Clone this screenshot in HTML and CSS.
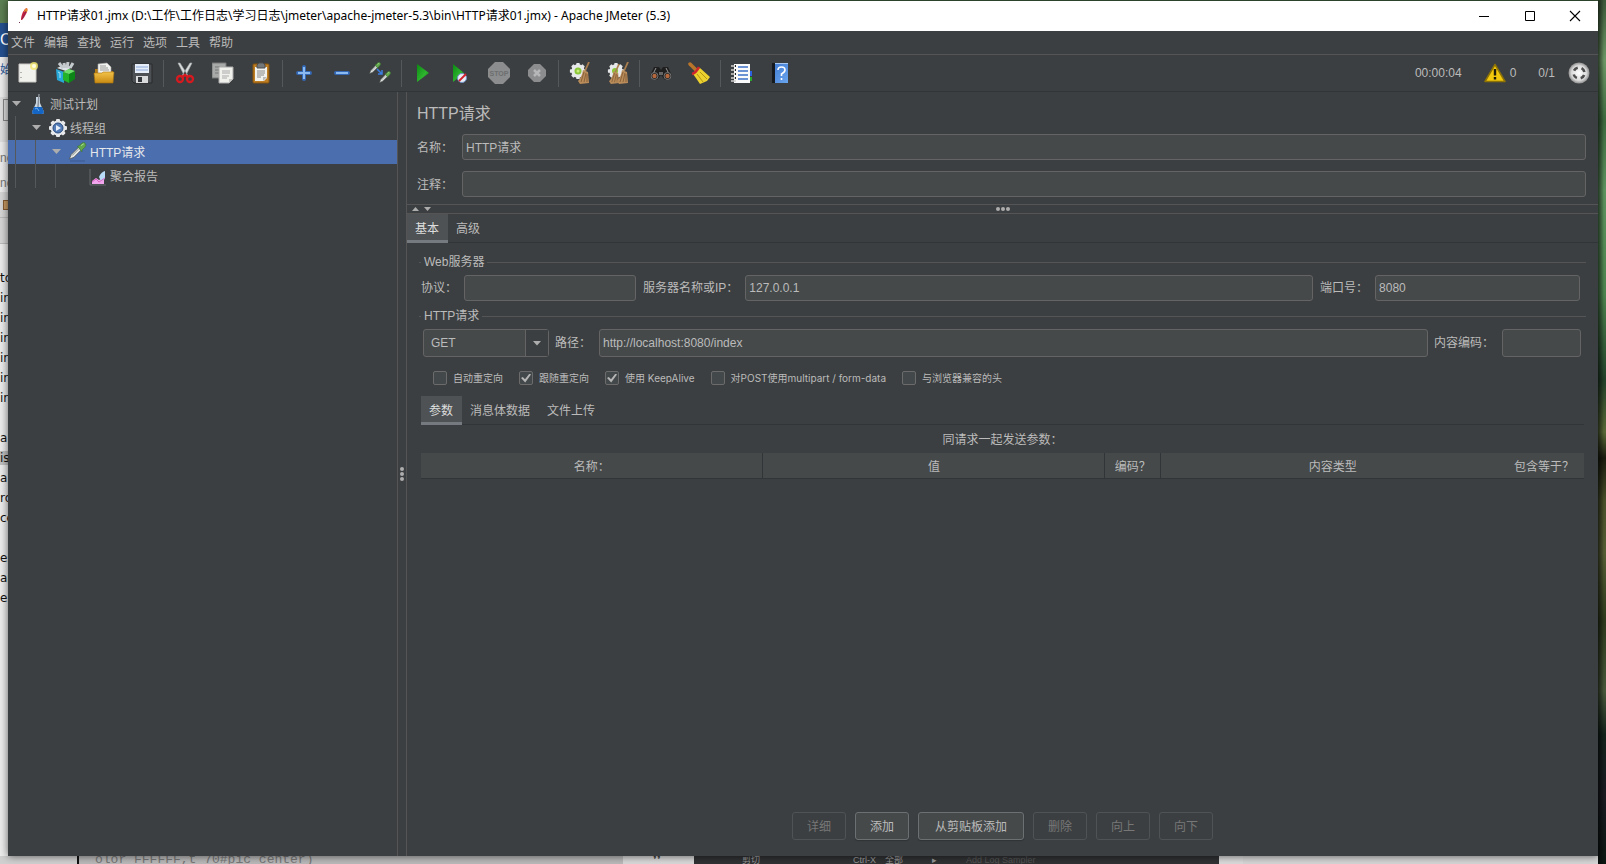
FILE: index.html
```html
<!DOCTYPE html>
<html lang="zh-CN">
<head>
<meta charset="utf-8">
<title>HTTP请求01.jmx - Apache JMeter (5.3)</title>
<link rel="stylesheet" href="styles.css">
</head>
<body>
<svg width="0" height="0" class="defs" aria-hidden="true">
  <defs>
    <linearGradient id="gold" x1="0" y1="0" x2="0" y2="1"><stop offset="0" stop-color="#f3c34a"/><stop offset="1" stop-color="#c98a12"/></linearGradient>
    <linearGradient id="green" x1="0" y1="0" x2="1" y2="1"><stop offset="0" stop-color="#0a8a12"/><stop offset=".6" stop-color="#2fb52f"/><stop offset="1" stop-color="#0a7a10"/></linearGradient>
    <linearGradient id="blue" x1="0" y1="0" x2="1" y2="1"><stop offset="0" stop-color="#3f78d0"/><stop offset="1" stop-color="#6aa5ee"/></linearGradient>
    <radialGradient id="silver"><stop offset="0" stop-color="#ffffff"/><stop offset=".7" stop-color="#dcdcdc"/><stop offset="1" stop-color="#8f8f8f"/></radialGradient>
    <symbol id="gear" viewBox="0 0 20 20">
      <g fill="#e6e8ea"><circle cx="10" cy="10" r="7.4"/><g id="teeth"><rect x="8" y="1" width="4" height="18" rx="1"/><rect x="1" y="8" width="18" height="4" rx="1"/></g><use href="#teeth" transform="rotate(45 10 10)"/></g>
    </symbol>
    <symbol id="dropper" viewBox="0 0 20 20">
      <path d="M1 19l2-5 8-8 3 3-8 8z" fill="#e3e6e4" stroke="#4c5450" stroke-width=".8"/><path d="M4 15l7-7" stroke="#7c8580" stroke-width="1"/><path d="M10 5l2-1 3-3q3-1 4 1t-1 4l-3 3 0 2z" fill="#62a84c" stroke="#3b7430" stroke-width=".7"/><path d="M14 4l3-2" stroke="#b4e29d"/>
    </symbol>
    <symbol id="broom" viewBox="0 0 12 22">
      <path d="M11 0L7 9" stroke="#a97d4e" stroke-width="1.8"/><path d="M5 8l5 2 1 11-9 1-2-3q4-4 5-11z" fill="#b98c5a"/><path d="M6 10L3 20M8 11L6 20M9 12v8" stroke="#76522c" stroke-width=".7"/>
    </symbol>
  </defs>
</svg>
<div class="desktop" aria-hidden="true">
  <div class="editor">
    <div class="ribbon">C</div>
    <div class="ribbon-row">始</div>
    <div class="ribbon-box"><i></i></div>
    <div class="editor-tab">nc</div>
    <div class="editor-tab">nc</div>
    <div class="editor-tool"><i></i></div>
    <div class="editor-tool"></div>
    <pre class="code">to
in
in
in
in
in
in

a
<mark>is</mark>
a
ro
ce

es
ar
en</pre>
  </div>
  <div class="below">
    <div class="below-code">olor_FFFFFF,t_70#pic_center)</div>
    <div class="below-mark">❜❜</div>
    <div class="below-menu"><span>剪切</span><span>Ctrl-X</span><span>全部</span><span>▸</span><span class="dim">Add Log Sampler</span></div>
    <div class="below-page"></div>
  </div>
</div>

<main class="window">
  <header class="titlebar">
    <svg class="feather" width="12" height="16" viewBox="0 0 12 16"><path d="M3 12Q3 6 7 1l2-1q1 2-1 6t-4 6z" fill="#c8203c"/><path d="M7 1l2-1q1 2 0 4l-3 0z" fill="#e8862c"/><path d="M4 11l4-8" stroke="#7b2356" stroke-width=".8"/><path d="M1 15l1-1" stroke="#6f2c55"/></svg>
    <h1 class="caption">HTTP请求01.jmx (D:\工作\工作日志\学习日志\jmeter\apache-jmeter-5.3\bin\HTTP请求01.jmx) - Apache JMeter (5.3)</h1>
    <div class="winbuttons">
      <button aria-label="最小化"><svg width="12" height="12" viewBox="0 0 12 12"><path d="M1 6.500h10" stroke="#000"/></svg></button>
      <button aria-label="最大化"><svg width="12" height="12" viewBox="0 0 12 12"><path d="M1.500 1.500h9v9h-9z" fill="none" stroke="#000"/></svg></button>
      <button aria-label="关闭"><svg width="12" height="12" viewBox="0 0 12 12"><path d="M1 1l10 10M11 1L1 11" stroke="#000" stroke-width="1.100"/></svg></button>
    </div>
  </header>

  <nav class="menubar">
    <button>文件</button><button>编辑</button><button>查找</button><button>运行</button><button>选项</button><button>工具</button><button>帮助</button>
  </nav>

  <div class="toolbar">
    <div class="group">
      <button aria-label="新建"><svg viewBox="0 0 22 22"><path d="M2 2h17v18H2z" fill="#f1f1ee" stroke="#c9c9c4"/><path d="M4 10v1M4 15v1" stroke="#777"/><circle cx="17" cy="4" r="4" fill="#f4e96b" opacity=".8"/><circle cx="17" cy="4" r="2" fill="#fffde0"/></svg></button>
      <button aria-label="模板"><svg viewBox="0 0 22 22"><path d="M2 6l7-3 8 2-6 4z" fill="#dde3e6"/><path d="M4 1l4 5M9 1l1 5M13 0l-1 6M18 1l-3 5" stroke="#c3c9cc" stroke-width="3"/><path d="M1 7l8 3v11l-7-3z" fill="#28a8d8"/><path d="M3 10l2 1v5" stroke="#a7e3f7" fill="none"/><path d="M8 10l6 2v9l-6-3z" fill="#23b329"/><path d="M14 12l6-3v8l-6 4z" fill="#0c8717"/><path d="M8 10l6-3 6 2-6 3z" fill="#6de06a"/></svg></button>
      <button aria-label="打开"><svg viewBox="0 0 22 22"><path d="M2 7h5l1 2h12v11H2z" fill="#b57b15"/><path d="M5 2l9-1 4 4v8H5z" fill="#f2f2ef" stroke="#aaa" stroke-width=".6"/><path d="M7 4h6M7 6h8M7 8h9" stroke="#999"/><path d="M1 11h8l1-1h11l-1 11H2z" fill="url(#gold)" stroke="#a8740f" stroke-width=".6"/></svg></button>
      <button aria-label="保存"><svg viewBox="0 0 22 22"><path d="M1 2h20v19H3l-2-2z" fill="#4d5054" stroke="#292b2d"/><path d="M4 2h14v9H4z" fill="#e4edf8"/><path d="M5 5h12M5 8h12" stroke="#8cabda"/><path d="M5 14h12v7H5z" fill="#d9dadb"/><path d="M7 15h4v5H7z" fill="#33363a"/></svg></button>
    </div>
    <div class="group">
      <button aria-label="剪切"><svg viewBox="0 0 22 22"><path d="M4 1l2 0 7 11 1 2-4-1zM18 1l-2 0-7 11-1 2 4-1z" fill="#dadddd" stroke="#a3a6a7" stroke-width=".6"/><g fill="none" stroke="#d71920" stroke-width="2.300"><ellipse cx="6" cy="17" rx="3" ry="3"/><ellipse cx="16" cy="17" rx="3" ry="3"/><path d="M8 15l3-2 3 2"/></g></svg></button>
      <button aria-label="复制"><svg viewBox="0 0 22 22"><path d="M0 1h14v15H0z" fill="#a8aaaa" stroke="#777"/><path d="M3 5h5M3 8h4M3 11h4" stroke="#777"/><path d="M7 5h14v12l-4 4H7z" fill="#f0f0ed" stroke="#aaa"/><path d="M10 9h8M10 11h8M10 14h7M10 16h5" stroke="#aaa"/><path d="M21 17h-4v4z" fill="#c5c5c2"/></svg></button>
      <button aria-label="粘贴"><svg viewBox="0 0 22 22"><rect x="3" y="2" width="16" height="19" rx="1" fill="#bd7d22" stroke="#86540e"/><path d="M5 5h12v11l-3 3H5z" fill="#f1f1ee"/><path d="M7 3l2-2h4l2 2v3H7z" fill="#74777a" stroke="#4c4f50"/><path d="M7 9h8M7 11h8M7 13h7M7 15h4" stroke="#888"/><path d="M17 15h-4v4z" fill="#bbb"/></svg></button>
    </div>
    <div class="group">
      <button aria-label="展开全部"><svg viewBox="0 0 22 22"><path d="M11 5v12M5 11h12" stroke="#3568b4" stroke-width="4" stroke-linecap="round"/><path d="M11 5v12M5 11h12" stroke="#8bbaf0" stroke-width="2"/></svg></button>
      <button aria-label="收起全部"><svg viewBox="0 0 22 22"><path d="M5 11h12" stroke="#3568b4" stroke-width="4" stroke-linecap="round"/><path d="M5 11h12" stroke="#8bbaf0" stroke-width="2"/></svg></button>
      <button aria-label="切换"><svg viewBox="0 0 22 22"><use href="#dropper" x="0" y="0" width="12" height="12"/><use href="#dropper" x="10" y="9" width="12" height="12"/><path d="M8 7l5 5M13 8v4H9" stroke="#3c7ee0" stroke-width="1.500" fill="none"/></svg></button>
    </div>
    <div class="group">
      <button aria-label="启动"><svg viewBox="0 0 22 22"><path d="M5 2l12 9L5 20z" fill="url(#green)"/></svg></button>
      <button aria-label="不停顿开始"><svg viewBox="0 0 22 22"><path d="M3 2l11 9L3 20z" fill="url(#green)"/><circle cx="12" cy="16" r="4.500" fill="#e9edf4" stroke="#6f92c9"/><path d="M9 19l7-7" stroke="#d3202a" stroke-width="1.800"/></svg></button>
      <button aria-label="停止" disabled><svg viewBox="0 0 22 22"><path d="M7 0h8l7 7v8l-7 7H7l-7-7V7z" fill="#8b8d8e"/><text x="11" y="14" text-anchor="middle" class="stoptext">STOP</text></svg></button>
      <button aria-label="关闭测试" disabled><svg viewBox="0 0 22 22"><path d="M8 2h6l6 6v6l-6 6H8l-6-6V8z" fill="#8b8d8e"/><path d="M8 8l6 6M14 8l-6 6" stroke="#b5b7b8" stroke-width="2.500"/></svg></button>
    </div>
    <div class="group">
      <button aria-label="清除"><svg viewBox="0 0 22 22"><use href="#gear" x="0" y="0" width="18" height="18"/><circle cx="9" cy="9" r="3.500" fill="#8bc63a"/><circle cx="9" cy="9" r="1.500" fill="#c9ed7d"/><use href="#broom" x="9" y="0" width="12" height="22"/></svg></button>
      <button aria-label="清除全部"><svg viewBox="0 0 22 22"><use href="#gear" x="0" y="0" width="18" height="18"/><circle cx="8" cy="9" r="3" fill="#8bc63a"/><use href="#broom" x="2" y="2" width="11" height="20"/><use href="#broom" x="10" y="0" width="12" height="22"/></svg></button>
    </div>
    <div class="group">
      <button aria-label="查找"><svg viewBox="0 0 22 22"><path d="M4 5h5l2 3 2-3h5l4 9-3 4h-4l-4-5-4 5H3l-3-4z" fill="#1f1f1f"/><path d="M6 6l-3 6M16 6l3 6" stroke="#999"/><circle cx="4.500" cy="14" r="3.500" fill="#222" stroke="#888" stroke-width=".8"/><circle cx="17.500" cy="14" r="3.500" fill="#222" stroke="#888" stroke-width=".8"/><circle cx="4.500" cy="14" r="2.200" fill="#b5673d"/><circle cx="17.500" cy="14" r="2.200" fill="#b5673d"/><path d="M9 10h4v3H9z" fill="#666"/></svg></button>
      <button aria-label="重置查找"><svg viewBox="0 0 22 22"><path d="M2 2l6 6" stroke="#b9762b" stroke-width="3.500" stroke-linecap="round"/><path d="M8 8l4-2 10 9-3 4-7 3Q8 16 5 12z" fill="#ecd12f"/><path d="M9 12l6 8M12 10l7 7" stroke="#b39514"/><path d="M4 12Q8 11 11 5" stroke="#d0262b" stroke-width="2.600" fill="none"/></svg></button>
    </div>
    <div class="group">
      <button aria-label="函数助手"><svg viewBox="0 0 22 22"><path d="M3 2h16v19H3z" fill="#fafafa"/><path d="M19 9h2v5h-2z" fill="#2c62df"/><path d="M19 15h2v4h-2z" fill="#2aa52c"/><path d="M7 5h10M7 9h10M7 13h10M7 17h10" stroke="#3c71c8" stroke-width="1.300"/><path d="M0 4h5M0 8h5M0 12h5M0 16h5M0 19h5" stroke="#cfcfcf" stroke-width="1.500"/><path d="M4 4h1M4 8h1M4 12h1M4 16h1" stroke="#222" stroke-width="2"/></svg></button>
      <button aria-label="帮助"><svg viewBox="0 0 22 22"><path d="M3 1h16v20H3z" fill="url(#blue)"/><path d="M3 1h3v20H3z" fill="#16191d"/><path d="M6 1h13v1H6z" fill="#a8c8ef"/><path d="M9 8q0-3 3.500-3t3.500 3q0 2-3.500 4v2M12.500 16v2" fill="none" stroke="#fff" stroke-width="1.600"/></svg></button>
    </div>
    <div class="status">
      <span class="elapsed">00:00:04</span>
      <button class="warn"><svg width="22" height="20" viewBox="0 0 22 20"><path d="M11 1.500L21 18.500H1z" fill="#f3c70c" stroke="#8d7305" stroke-width="1.500" stroke-linejoin="round"/><path d="M11 6v6.500M11 14v2.500" stroke="#1f1b08" stroke-width="2.400"/></svg>0</button>
      <span>0/1</span>
      <svg width="22" height="22" viewBox="0 0 22 22"><circle cx="11" cy="11" r="10.500" fill="url(#silver)"/><circle cx="11" cy="11" r="5.500" fill="none" stroke="#4d4d4d" stroke-width="2.600" stroke-dasharray="4.640 4" stroke-dashoffset="-2"/></svg>
    </div>
  </div>

  <div class="workspace">
    <aside class="tree" role="tree">
      <div class="node" role="treeitem"><span class="arrow"></span><svg viewBox="0 0 20 20"><path d="M8 3h4v6l4 9q0 2-2 2H6q-2 0-2-2l4-9z" fill="#c9d7e4"/><path d="M6 13h8l2 5q0 2-2 2H6q-2 0-2-2z" fill="#1565c4"/><path d="M11 0l-1 13" stroke="#899099" stroke-width="1.500"/><path d="M7 15l2-1 2 3" stroke="#6fb1f0" fill="none"/></svg><span class="text">测试计划</span></div>
      <div class="node" role="treeitem"><i class="guide"></i><span class="arrow"></span><svg viewBox="0 0 20 20"><use href="#gear" width="20" height="20"/><circle cx="10" cy="10" r="5" fill="#537bb5" stroke="#294a7e"/><path d="M8 7l5 3-5 3z" fill="#e7effa"/></svg><span class="text">线程组</span></div>
      <div class="node selected" role="treeitem"><i class="guide"></i><i class="guide"></i><span class="arrow"></span><svg viewBox="0 0 20 20"><use href="#dropper" width="19" height="18"/><path d="M2 19h15" stroke="#344d7c" opacity=".6"/></svg><span class="text">HTTP请求</span></div>
      <div class="node" role="treeitem"><i class="guide"></i><i class="guide"></i><i class="guide"></i><span class="arrow leaf"></span><svg viewBox="0 0 20 20"><path d="M2 3v16h16" stroke="#666a6d" fill="none"/><path d="M4 18v-3l4-3 3 2 5-3v7z" fill="#f0a5ec"/><path d="M11 11q2-5 6-6v8l-4 2z" fill="#b9dcf8"/><path d="M4 16l4-3 3 3 6-4" stroke="#d960c3" fill="none"/></svg><span class="text">聚合报告</span></div>
    </aside>
    <div class="splitter"><i></i><i></i><i></i></div>
    <section class="panel">
      <div class="intro">
        <h2>HTTP请求</h2>
        <div class="line"><label for="name">名称：</label><input id="name" type="text" value="HTTP请求"></div>
        <div class="line"><label for="comment">注释：</label><input id="comment" type="text"></div>
      </div>
      <div class="hsplit"><span class="tri up"></span><span class="tri"></span><span class="dots"><i></i><i></i><i></i></span></div>
      <div class="tabs" role="tablist"><button class="on" role="tab">基本</button><button role="tab">高级</button></div>
      <div class="content">
        <div class="legend">Web服务器</div>
        <div class="row server">
          <label for="proto">协议：</label><input id="proto" type="text">
          <label for="host">服务器名称或IP：</label><input id="host" type="text" value="127.0.0.1">
          <label for="port">端口号：</label><input id="port" type="text" value="8080">
        </div>
        <div class="legend">HTTP请求</div>
        <div class="row path">
          <span class="combo"><select aria-label="方法"><option>GET</option><option>POST</option></select><span class="arrowbox"></span></span>
          <label for="path">路径：</label><input id="path" type="text" value="http://localhost:8080/index">
          <label for="enc">内容编码：</label><input id="enc" type="text">
        </div>
        <div class="checks">
          <label><input type="checkbox">自动重定向</label>
          <label><input type="checkbox" checked>跟随重定向</label>
          <label><input type="checkbox" checked>使用 KeepAlive</label>
          <label><input type="checkbox">对POST使用multipart / form-data</label>
          <label><input type="checkbox">与浏览器兼容的头</label>
        </div>
        <div class="tabs sub" role="tablist"><button class="on" role="tab">参数</button><button role="tab">消息体数据</button><button role="tab">文件上传</button></div>
        <table>
          <caption>同请求一起发送参数：</caption>
          <colgroup><col class="wide"><col class="wide"><col class="encode"><col class="type"><col class="include"></colgroup>
          <thead><tr><th>名称：</th><th>值</th><th>编码？</th><th>内容类型</th><th>包含等于？</th></tr></thead>
        </table>
      </div>
      <div class="actions">
        <button disabled>详细</button><button>添加</button><button class="long">从剪贴板添加</button><button disabled>删除</button><button disabled>向上</button><button disabled>向下</button>
      </div>
    </section>
  </div>
</main>
</body>
</html>
```
FILE: styles.css
```css
* { box-sizing: border-box; }
html, body { height: 100%; }
body {
  margin: 0;
  padding: 1px 8px 8px;
  display: flex;
  overflow: hidden;
  background: #26351f;
  color: #bbbbbb;
  font: 12px/16px "Liberation Sans", "Noto Sans CJK SC", sans-serif;
}
.defs { position: absolute; }
button, input, select { font: inherit; color: inherit; margin: 0; }
button { background: none; border: 0; padding: 0; }

/* Desktop behind the window */
.desktop {
  position: absolute;
  inset: 0;
  overflow: hidden;
  background: linear-gradient(90deg, rgba(0,0,0,.45), rgba(0,0,0,0) 6px) right / 8px 100% no-repeat,
    linear-gradient(#3d5a3a 0, #6f9a68 7%, #3f6b40 14%, #5f9561 22%, #4f8550 34%, #24422a 44%, #5b6a38 50%, #1b1d10 53%, #4b512b 58%, #575f36 64%, #2f3a1d 72%, #4a5a3c 80%, #14231c 85%, #1a1c22 92%, #0c1712 100%);
}
.editor {
  width: 8px;
  height: 100%;
  padding-top: 23px;
  background: linear-gradient(#5c7f52 23px, #ececec 23px);
  overflow: hidden;
  color: #222;
}
.ribbon { height: 34px; padding-top: 9px; background: #24508f; color: #fff; font-size: 16px; }
.ribbon-row { height: 40px; padding-top: 5px; color: #2a5699; }
.ribbon-box { height: 45px; padding: 2px 0 0 3px; background: #dedede; }
.ribbon-box i { display: block; width: 12px; height: 22px; border: 1px solid #888; }
.editor-tab { height: 25px; padding-top: 8px; color: #777; }
.editor-tool { height: 26px; padding: 8px 0 0 3px; border-bottom: 1px solid #bbb; background: #d6d6d6; }
.editor-tool i { display: block; width: 10px; height: 10px; background: #c99b64; border: 1px solid #875d33; }
.code { margin: 24px 0 0 0; font: 12px/20px "DejaVu Sans", sans-serif; color: #111; }
.code mark { background: #c0c0c0; color: inherit; }
.below { position: absolute; left: 0; right: 8px; bottom: 0; height: 8px; display: flex; background: #d0d0d0; overflow: hidden; line-height: 8px; }
.below-code { flex: 0 0 546px; margin-left: 77px; padding-left: 16px; border-left: 2px solid #111; background: #b9b9b9; color: #777; font: 13px/8px "Liberation Mono", monospace; }
.below-mark { flex: 0 0 71px; padding-left: 30px; background: #d8d8d8; color: #444; }
.below-menu { flex: 0 0 525px; display: flex; gap: 29px; padding-left: 48px; background: #303133; color: #999; font-size: 9px; }
.below-menu span:nth-child(2) { margin-left: 64px; }
.below-menu span:nth-child(3) { margin-left: -20px; }
.below-menu .dim { color: #555; }
.below-page { flex: 1; background: #d5d5d5; border-left: 24px solid #dadada; }

/* Window */
.window { position: relative; flex: 1; display: flex; flex-direction: column; min-width: 0; background: #3c3f41; box-shadow: 0 0 8px rgba(0,0,0,.6); }
.titlebar { display: flex; align-items: center; height: 30px; padding: 0 1px 0 10px; background: #fff; color: #000; }
.feather { margin-right: 7px; }
.caption { flex: 1; margin: 0; font: 12px/16px "Noto Sans", "Noto Sans CJK SC", sans-serif; }
.winbuttons { display: flex; }
.winbuttons button { width: 46px; height: 30px; display: grid; place-items: center; }
.winbuttons button:last-child { width: 44px; }
.menubar { display: flex; gap: 9px; height: 24px; padding-left: 3px; border-bottom: 1px solid #555555; }
.toolbar { display: flex; align-items: center; height: 37px; border-bottom: 1px solid #323537; }
.group { display: flex; align-items: center; gap: 16px; height: 27px; padding: 0 10px 0 9px; }
.group + .group { padding-left: 10px; border-left: 1px solid #55585a; }
.group button, .group svg { display: block; width: 22px; height: 22px; }
.stoptext { font: bold 7px "Liberation Sans", sans-serif; fill: #6d6f70; }
.status { display: flex; align-items: center; margin-left: auto; padding-right: 8px; }
.elapsed { margin-right: 22px; }
.warn { display: flex; align-items: center; gap: 4px; margin-right: 22px; }
.status > svg { margin-left: 13px; }

.workspace { flex: 1; display: flex; min-height: 0; }
.tree { flex: 0 0 389px; }
.node { display: flex; align-items: center; height: 24px; padding-left: 2px; }
.node svg { width: 20px; height: 20px; margin: 0 2px 0 6px; }
.node .text { padding-top: 2px; }
.node .guide { align-self: stretch; width: 20px; padding-left: 5px; }
.node .guide::before { content: ""; display: block; width: 1px; height: 100%; background: #55585a; }
.arrow { width: 12px; height: 6px; flex: none; }
.arrow:not(.leaf)::before { content: ""; display: block; width: 9px; height: 5px; margin-left: 2px; background: #adadad; clip-path: polygon(0 0, 100% 0, 50% 100%); }
.selected { background: #4b6eaf; color: #e6e8ec; }
.splitter { flex: 0 0 10px; border: solid #555555; border-width: 0 1px; display: flex; flex-direction: column; justify-content: center; align-items: center; gap: 1px; }
.splitter i, .dots i { width: 4px; height: 4px; border-radius: 2px; background: #adadad; }

.panel { flex: 1; min-width: 0; display: flex; flex-direction: column; }
.intro { padding: 11px 12px 7px 10px; }
h2 { margin: 0 0 9px; font-size: 16px; line-height: 22px; font-weight: normal; }
.line { display: flex; align-items: center; margin-bottom: 11px; }
.line:last-child { margin: 0; }
.line label { width: 45px; padding-top: 2px; }
input[type="text"] { height: 26px; min-width: 0; padding: 0 3px; background: #45494a; border: 1px solid #646464; border-radius: 3px; }
.line input[type="text"] { flex: 1; padding-bottom: 2px; }
.hsplit { display: flex; align-items: center; height: 10px; padding: 0 29px 0 5px; border: solid #555555; border-width: 1px 0; }
.tri { width: 7px; height: 4px; margin-right: 5px; background: #adadad; clip-path: polygon(0 0, 100% 0, 50% 100%); }
.tri.up { clip-path: polygon(50% 0, 100% 100%, 0 100%); }
.dots { display: flex; gap: 1px; margin: 0 auto; }
.tabs { display: flex; height: 29px; border-bottom: 1px solid #323537; }
.tabs button { height: 29px; padding: 3px 9px 0 8px; border-bottom: 3px solid transparent; }
.tabs .on { background: #4e5254; border-color: #747a80; color: #dddddd; }
.content { padding: 11px 14px 0; }
.legend { display: flex; align-items: center; gap: 3px; height: 16px; margin: 0 -2px; }
.legend::before, .legend::after { content: ""; height: 1px; width: 2px; background: #555555; }
.legend::after { flex: 1; }
.row { display: flex; align-items: center; }
.server { margin: 5px 4px 7px 0; }
.server label { padding-right: 7px; }
.server input { margin-right: 7px; }
.server input:last-child { margin: 0; }
.server label:first-child { width: 43px; }
#proto { flex: 164; }
#host { flex: 560; }
#port { flex: 197; }
.path { margin: 5px 3px 0 2px; }
.path input[type="text"], .combo select { height: 28px; }
.path label { padding: 0 8px 0 6px; }
#path { flex: 821; }
#enc { flex: 71; }
.combo { position: relative; flex: 0 0 126px; display: flex; }
.combo select { appearance: none; width: 100%; padding: 0 7px; background: #45494a; border: 1px solid #646464; border-radius: 3px; }
.arrowbox { position: absolute; top: 1px; right: 1px; bottom: 1px; width: 23px; border-left: 1px solid #646464; background: #3c3f41; display: grid; place-items: center; pointer-events: none; }
.arrowbox::before { content: ""; width: 9px; height: 5px; background: #adadad; clip-path: polygon(0 0, 100% 0, 50% 100%); }
.checks { display: flex; gap: 16px; padding: 13px 12px 10px; font-family: Inter, "Noto Sans CJK SC", sans-serif; font-size: 10px; }
.checks label { display: flex; align-items: center; gap: 6px; }
.checks input { appearance: none; width: 14px; height: 14px; border: 1px solid #6b6b6b; border-radius: 2px; background: #43494a; display: grid; place-items: center; }
.checks input:checked::before { content: ""; width: 10px; height: 9px; background: #b5b5b5; clip-path: polygon(0 50%, 18% 38%, 40% 65%, 85% 0, 100% 12%, 42% 100%); }
table { width: 100%; border-collapse: collapse; table-layout: fixed; }
caption { height: 28px; padding-top: 1px; line-height: 28px; }
.wide { width: 29.4%; }
.encode { width: 56px; }
.type { width: auto; }
.include { width: 80px; }
th { height: 25px; padding: 3px 0 0; font-weight: normal; background: #45494a; border-bottom: 1px solid #323537; }
th:nth-child(-n+3) { border-right: 1px solid #323537; }
.actions { display: flex; justify-content: center; gap: 9px; margin-top: auto; padding-bottom: 16px; }
.actions button { height: 28px; padding: 1px 14px 0; border: 1px solid #6b7072; border-radius: 3px; background: #45494a; box-shadow: 0 1px 1px #303335; }
.actions .long { padding: 1px 16px 0; }
.actions button:disabled { background: none; border-color: #505355; color: #777777; box-shadow: none; }
```
